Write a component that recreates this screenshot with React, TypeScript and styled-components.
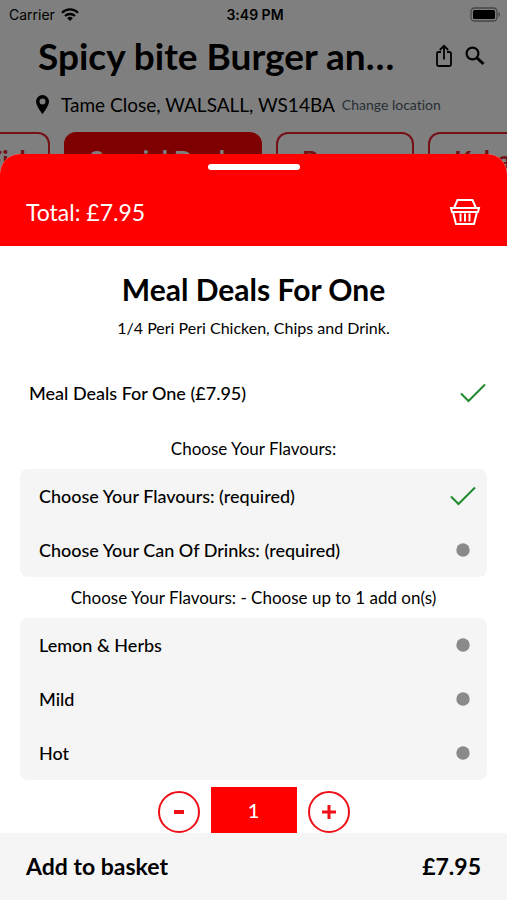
import React, { useState } from 'react';
import styled, { createGlobalStyle } from 'styled-components';

const RED = '#ff0000';
const PANEL = '#f5f5f5';

const GlobalStyle = createGlobalStyle`
  *, *::before, *::after { box-sizing: border-box; }
  body {
    margin: 0;
    background: #fff;
    color: #000;
    font-family: Lato, "Open Sans", sans-serif;
    font-variant-ligatures: none;
  }
  button { font: inherit; color: inherit; background: none; border: 0; padding: 0; cursor: pointer; }
  h1, h2, h3, p { margin: 0; }
  svg { display: block; flex: none; }
`;

const Screen = styled.div`
  display: flex;
  flex-direction: column;
  min-height: 100vh;
`;

const Storefront = styled.header`
  position: relative;
  overflow: hidden;
  background: #fff;
  &::after {
    content: '';
    position: absolute;
    inset: 0;
    background: rgba(0, 0, 0, 0.5);
    pointer-events: none;
  }
`;

const StatusBar = styled.div`
  display: grid;
  grid-template-columns: 1fr auto 1fr;
  align-items: center;
  height: 28px;
  padding: 0 6px 0 9px;
  font-family: Inter, sans-serif;
  font-size: 14px;
`;

const Carrier = styled.span`
  display: flex;
  align-items: center;
  gap: 6px;
`;

const Clock = styled.time`
  font-weight: 600;
`;

const BatteryIcon = styled.svg`
  justify-self: end;
`;

const TitleRow = styled.div`
  display: flex;
  align-items: center;
  height: 56px;
  padding: 0 22px 0 38px;
`;

const ShopName = styled.h1`
  flex: 1;
  white-space: nowrap;
  font-size: 37px;
  line-height: 48px;
  font-weight: 700;
`;

const IconButton = styled.button`
  && {
    display: flex;
    margin-left: 12px;
  }
`;

const AddressRow = styled.div`
  display: flex;
  align-items: center;
  height: 40px;
  padding: 0 36px;
  white-space: nowrap;
`;

const Address = styled.p`
  margin: 0 7px 0 12px;
  font-size: 19px;
`;

const ChangeLink = styled.a`
  color: #50606c;
  font-size: 14px;
  text-decoration: none;
`;

const Tabs = styled.nav`
  display: flex;
  gap: 14px;
  margin: 8px 0 0 -28px;
`;

const Tab = styled.button<{ $active?: boolean; $compact?: boolean }>`
  && {
    flex: none;
    height: 54px;
    padding: 0 ${p => (p.$compact ? 14 : 24)}px;
    border: 2px solid ${p => (p.$active ? RED : '#e8202c')};
    border-radius: 12px;
    background: ${p => (p.$active ? RED : '#fff')};
    color: ${p => (p.$active ? '#fff' : '#e8202c')};
    font-size: 25px;
    font-weight: 700;
  }
`;

const Sheet = styled.main`
  position: relative;
  display: flex;
  flex-direction: column;
  flex: 1;
  margin-top: -32px;
  border-radius: 20px 20px 0 0;
  overflow: hidden;
  background: #fff;
`;

const SheetHeader = styled.div`
  display: flex;
  flex-direction: column;
  height: 92px;
  padding: 10px 26px 0;
  background: ${RED};
  color: #fff;
`;

const Handle = styled.span`
  flex: none;
  align-self: center;
  width: 92px;
  height: 6px;
  border-radius: 3px;
  background: #fff;
`;

const TotalRow = styled.div`
  display: flex;
  flex: none;
  align-items: center;
  justify-content: space-between;
  height: 84px;
  font-size: 23px;
`;

const Intro = styled.section`
  padding: 24px 20px 0;
  text-align: center;
`;

const MealTitle = styled.h2`
  font-size: 30px;
  line-height: 38px;
  font-weight: 700;
`;

const MealText = styled.p`
  margin-top: 8px;
  font-size: 16px;
  line-height: 24px;
`;

const SizeChoice = styled.div`
  margin: 26px 0 8px;
  padding: 0 21px 0 29px;
`;

const Group = styled.fieldset`
  min-width: 0;
  margin: 0 20px;
  padding: 0;
  border: 0;
`;

const GroupTitle = styled.legend`
  width: 100%;
  padding: 8px 0 7px;
  text-align: center;
  font-size: 17px;
  line-height: 26px;
`;

const GroupBox = styled.div`
  padding: 0 11px 0 19px;
  border-radius: 8px;
  background: ${PANEL};
`;

const OptionRow = styled.label`
  display: flex;
  align-items: center;
  justify-content: space-between;
  height: 54px;
  font-size: 18px;
  font-weight: 500;
  cursor: pointer;
`;

const OptionInput = styled.input`
  position: absolute;
  opacity: 0;
  pointer-events: none;
`;

const Stepper = styled.div`
  display: flex;
  align-items: center;
  justify-content: center;
  gap: 11px;
  margin-top: 7px;
`;

const RoundButton = styled.button`
  && {
    display: flex;
    align-items: center;
    justify-content: center;
    width: 42px;
    height: 42px;
    margin-top: 3px;
    border: 2px solid #ee1019;
    border-radius: 50%;
  }
`;

const Quantity = styled.output`
  width: 86px;
  background: ${RED};
  color: #fff;
  text-align: center;
  font-size: 20px;
  line-height: 46px;
  font-weight: 500;
`;

const BasketBar = styled.button`
  && {
    display: flex;
    align-items: center;
    justify-content: space-between;
    flex: 1;
    min-height: 67px;
    padding: 0 26px 2px;
    background: ${PANEL};
    font-size: 23px;
    font-weight: 700;
  }
`;

const Mark = ({ checked }: { checked: boolean }) => (
  <svg width="26" height="20" viewBox="0 0 26 20" aria-hidden="true">
    {checked ? (
      <path d="M1 10.5 8.5 18 25 1.5" fill="none" stroke="#1f8a2c" strokeWidth="2" />
    ) : (
      <circle cx="13" cy="10" r="6.7" fill="#8a8a8a" />
    )}
  </svg>
);

type OptionProps = { label: string; checked: boolean; onToggle: () => void };

const Option = ({ label, checked, onToggle }: OptionProps) => (
  <OptionRow>
    {label}
    <OptionInput type="checkbox" checked={checked} onChange={onToggle} />
    <Mark checked={checked} />
  </OptionRow>
);

const WifiIcon = () => (
  <svg width="18" height="13" viewBox="0 0 18 13" fill="none" stroke="#000" strokeWidth="2.3" aria-hidden="true">
    <path d="M1 4.7C5.5.3 12.5.3 17 4.7" />
    <path d="M4 8c2.8-2.7 7.2-2.7 10 0" />
    <path d="M9 13 6.2 10.2a4 4 0 0 1 5.6 0Z" fill="#000" stroke="none" />
  </svg>
);

const STEPS = ['Choose Your Flavours: (required)', 'Choose Your Can Of Drinks: (required)'];
const FLAVOURS = ['Lemon & Herbs', 'Mild', 'Hot'];
const MEAL = 'Meal Deals For One (£7.95)';

export default function App() {
  const [picked, setPicked] = useState<string[]>([MEAL, STEPS[0]]);
  const [count, setCount] = useState(1);
  const total = `£${(7.95 * count).toFixed(2)}`;

  const option = (label: string) => (
    <Option
      key={label}
      label={label}
      checked={picked.includes(label)}
      onToggle={() =>
        setPicked(now => (now.includes(label) ? now.filter(x => x !== label) : [...now, label]))
      }
    />
  );

  return (
    <Screen>
      <GlobalStyle />
      <Storefront>
        <StatusBar>
          <Carrier>
            Carrier
            <WifiIcon />
          </Carrier>
          <Clock>3:49 PM</Clock>
          <BatteryIcon width="31" height="15" viewBox="0 0 31 15" aria-hidden="true">
            <rect x="1" y="1" width="26" height="13" rx="3.5" fill="none" stroke="#8c8c8c" strokeWidth="1.3" />
            <rect x="3" y="3" width="22" height="9" rx="1.5" />
            <path d="M28.5 5v5c2-.8 2-4.2 0-5Z" fill="#8c8c8c" />
          </BatteryIcon>
        </StatusBar>
        <TitleRow>
          <ShopName>Spicy bite Burger an…</ShopName>
          <IconButton aria-label="Share">
            <svg width="18" height="24" viewBox="0 0 18 24" fill="none" stroke="#000" strokeWidth="1.8">
              <path d="M6 8H3.5A1.5 1.5 0 0 0 2 9.5v11A1.5 1.5 0 0 0 3.5 22h11a1.5 1.5 0 0 0 1.5-1.5v-11A1.5 1.5 0 0 0 14.5 8H12M9 15.5V2M4.8 6 9 1.8 13.2 6" />
            </svg>
          </IconButton>
          <IconButton aria-label="Search">
            <svg width="20" height="20" viewBox="0 0 20 20" fill="none" stroke="#000">
              <circle cx="7.5" cy="7.5" r="5.9" strokeWidth="2.2" />
              <path d="m12 12 6.5 6" strokeWidth="3" />
            </svg>
          </IconButton>
        </TitleRow>
        <AddressRow>
          <svg width="13" height="19" viewBox="0 0 13 19" aria-hidden="true">
            <path
              fillRule="evenodd"
              d="M6.5 0A6.5 6.5 0 0 0 0 6.5C0 11 6.5 19 6.5 19S13 11 13 6.5A6.5 6.5 0 0 0 6.5 0Zm0 3.6a3 3 0 1 1 0 6 3 3 0 0 1 0-6Z"
            />
          </svg>
          <Address>Tame Close, WALSALL, WS14BA</Address>
          <ChangeLink href="#location">Change location</ChangeLink>
        </AddressRow>
        <Tabs aria-label="Menu sections">
          <Tab $compact>Fish</Tab>
          <Tab $active>Special Deals</Tab>
          <Tab>Burgers</Tab>
          <Tab>Kebabs</Tab>
        </Tabs>
      </Storefront>
      <Sheet>
        <SheetHeader>
          <Handle />
          <TotalRow>
            <span>Total: {total}</span>
            <svg width="32" height="28" viewBox="0 0 32 28" fill="none" stroke="#fff" strokeWidth="2" aria-hidden="true">
              <path d="M5 10 8.5 2h15L27 10M2 10h28l-1 4H3ZM4 14l3 12h18l3-12" />
              <path d="M11.5 15.5v8M16 15.5v8M20.5 15.5v8" />
            </svg>
          </TotalRow>
        </SheetHeader>
        <Intro>
          <MealTitle>Meal Deals For One</MealTitle>
          <MealText>1/4 Peri Peri Chicken, Chips and Drink.</MealText>
        </Intro>
        <SizeChoice>{option(MEAL)}</SizeChoice>
        <Group>
          <GroupTitle>Choose Your Flavours:</GroupTitle>
          <GroupBox>{STEPS.map(option)}</GroupBox>
        </Group>
        <Group>
          <GroupTitle>Choose Your Flavours: - Choose up to 1 add on(s)</GroupTitle>
          <GroupBox>{FLAVOURS.map(option)}</GroupBox>
        </Group>
        <Stepper>
          <RoundButton aria-label="Remove one" onClick={() => setCount(n => Math.max(1, n - 1))}>
            <svg width="10" height="4" viewBox="0 0 10 4"><path d="M0 0h10v4H0Z" fill="#ee1019" /></svg>
          </RoundButton>
          <Quantity>{count}</Quantity>
          <RoundButton aria-label="Add one" onClick={() => setCount(n => n + 1)}>
            <svg width="14" height="14" viewBox="0 0 14 14"><path d="M0 7h14M7 0v14" stroke="#ee1019" strokeWidth="3" /></svg>
          </RoundButton>
        </Stepper>
        <BasketBar>
          <span>Add to basket</span>
          <span>{total}</span>
        </BasketBar>
      </Sheet>
    </Screen>
  );
}
